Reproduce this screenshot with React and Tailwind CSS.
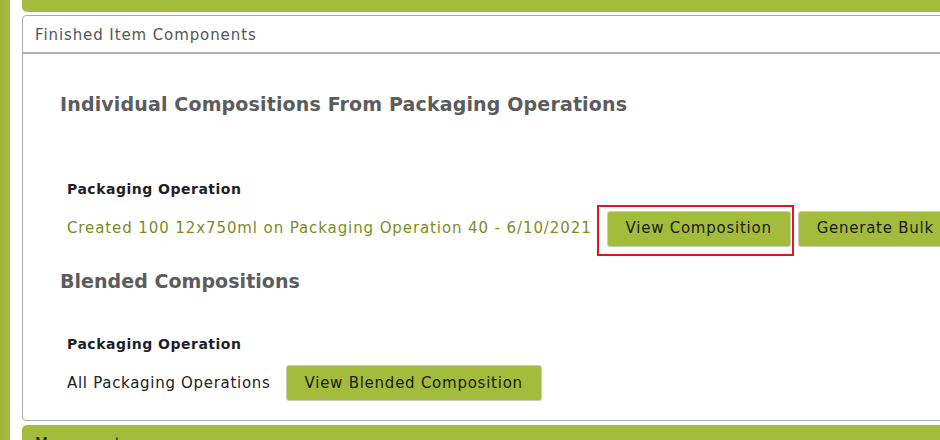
import React from 'react';

const font = { fontFamily: '"DejaVu Sans", Verdana, sans-serif' };

const GreenButton = ({ children, className = '' }) => (
  <button
    className={`shrink-0 h-[36px] px-[18px] rounded-[3px] border border-[#c9cbb8] bg-[#a4bc3c] text-[15px] tracking-[0.75px] text-[#1b1b12] whitespace-nowrap ${className}`}
  >
    {children}
  </button>
);

const App = () => {
  return (
    <div className="w-[940px] h-[440px] overflow-hidden bg-white flex" style={font}>
      {/* left accent strip */}
      <div className="w-[10px] shrink-0 bg-gradient-to-r from-[#9db33a] to-[#a8c040]" />

      <div className="ml-[12px] w-[1000px] shrink-0 flex flex-col">
        {/* previous section bar, mostly scrolled off */}
        <div className="shrink-0 h-[12px] bg-[#a4bc3c] rounded-bl-[5px] overflow-hidden relative">
          <span className="absolute left-[14px] top-[-19px] text-[15px] tracking-[0.9px] text-[#222] whitespace-nowrap">Finished Item Inventory</span>
        </div>

        {/* panel */}
        <div className="shrink-0 mt-[3px] h-[406px] border border-[#a9a9a9] rounded-[4px] flex flex-col">
          <div className="h-[38px] border-b-2 border-[#b0b0b0] px-[12px] pt-[2px] flex items-center text-[15px] tracking-[0.9px] text-[#555]">
            Finished Item Components
          </div>

          <div className="pl-[37px] pt-[36px]">
            <h2 className="text-[19px] font-bold tracking-[0.15px] text-[#5c5c5c]">Individual Compositions From Packaging Operations</h2>

            <div className="mt-[60px] pl-[7px]">
              <div className="text-[14px] font-bold tracking-[0.5px] text-[#1e1e28]">Packaging Operation</div>
              <div className="mt-[11px] flex items-center">
                <span className="shrink-0 text-[15px] tracking-[0.9px] text-[#7d8c1f] whitespace-nowrap">Created 100 12x750ml on Packaging Operation 40 - 6/10/2021</span>
                <div className="relative ml-[15px] shrink-0">
                  <GreenButton>View Composition</GreenButton>
                  <div className="absolute left-[-10px] top-[-6px] w-[197px] h-[51px] border-2 border-[#e3161e] pointer-events-none" />
                </div>
                <GreenButton className="ml-[7px]">Generate Bulk Report</GreenButton>
              </div>
            </div>

            <h2 className="mt-[20px] text-[19px] font-bold tracking-[0.05px] text-[#5c5c5c]">Blended Compositions</h2>

            <div className="mt-[39px] pl-[7px]">
              <div className="text-[14px] font-bold tracking-[0.5px] text-[#1e1e28]">Packaging Operation</div>
              <div className="mt-[10px] flex items-center">
                <span className="text-[15px] tracking-[0.7px] text-[#222]">All Packaging Operations</span>
                <GreenButton className="ml-[15px]">View Blended Composition</GreenButton>
              </div>
            </div>
          </div>
        </div>

        {/* next section bar */}
        <div className="shrink-0 mt-[4px] h-[40px] bg-[#a4bc3c] rounded-t-[5px] px-[13px] pt-[8px] text-[15px] tracking-[0.9px] text-[#222]">
          Movements
        </div>
      </div>
    </div>
  );
};

export default App;
